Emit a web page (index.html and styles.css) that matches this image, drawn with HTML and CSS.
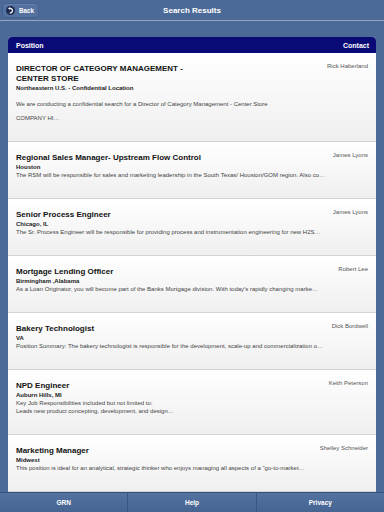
FILE: index.html
```html
<!DOCTYPE html>
<html lang="en">
<head>
    <meta charset="UTF-8">
    <meta name="viewport" content="width=device-width, initial-scale=1.0">
    <title>Search Results</title>
    <link rel="stylesheet" href="styles.css">
</head>
<body>
    <div class="navbar">
        <button class="back-button">
            <svg class="back-icon" width="9" height="9" viewBox="0 0 10 10">
                <circle cx="5" cy="5" r="5" fill="#1c2b4f" />
                <path d="M4.3 2.7 A2.5 2.5 0 1 1 4.1 7.6" stroke="#fff" stroke-width="1.4" fill="none" />
                <polygon points="2.2,2.7 4.6,1.2 4.6,4.2" fill="#fff" />
            </svg>
            Back
        </button>
        <div class="nav-title">Search Results</div>
    </div>

    <div class="main">
        <div class="panel">
            <div class="panel-header">
                <span>Position</span>
                <span>Contact</span>
            </div>

            <div class="job-row first">
                <div class="job-info">
                    <div class="job-title">DIRECTOR OF CATEGORY MANAGEMENT -<br>CENTER STORE</div>
                    <div class="job-location">Northeastern U.S. - Confidential Location</div>
                    <p class="job-desc">We are conducting a confidential search for a Director of Category Management - Center Store</p>
                    <p class="job-desc">COMPANY HI…</p>
                </div>
                <div class="job-contact">Rick Haberland</div>
            </div>

            <div class="job-row">
                <div class="job-info">
                    <div class="job-title">Regional Sales Manager- Upstream Flow Control</div>
                    <div class="job-location">Houston</div>
                    <div class="job-desc">The RSM will be responsible for sales and marketing leadership in the South Texas/ Houston/GOM region. Also co…</div>
                </div>
                <div class="job-contact">James Lyons</div>
            </div>

            <div class="job-row">
                <div class="job-info">
                    <div class="job-title">Senior Process Engineer</div>
                    <div class="job-location">Chicago, IL</div>
                    <div class="job-desc">The Sr. Process Engineer will be responsible for providing process and instrumentation engineering for new H2S…</div>
                </div>
                <div class="job-contact">James Lyons</div>
            </div>

            <div class="job-row">
                <div class="job-info">
                    <div class="job-title">Mortgage Lending Officer</div>
                    <div class="job-location">Birmingham ,Alabama</div>
                    <div class="job-desc">As a Loan Originator, you will become part of the Banks Mortgage division. With today's rapidly changing marke…</div>
                </div>
                <div class="job-contact">Robert Lee</div>
            </div>

            <div class="job-row">
                <div class="job-info">
                    <div class="job-title">Bakery Technologist</div>
                    <div class="job-location">VA</div>
                    <div class="job-desc">Position Summary: The bakery technologist is responsible for the development, scale-up and commercialization o…</div>
                </div>
                <div class="job-contact">Dick Bordwell</div>
            </div>

            <div class="job-row">
                <div class="job-info">
                    <div class="job-title">NPD Engineer</div>
                    <div class="job-location">Auburn Hills, MI</div>
                    <div class="job-desc">Key Job Responsibilities included but not limited to:</div>
                    <div class="job-desc">Leads new product concepting, development, and design…</div>
                </div>
                <div class="job-contact">Keith Peterson</div>
            </div>

            <div class="job-row">
                <div class="job-info">
                    <div class="job-title">Marketing Manager</div>
                    <div class="job-location">Midwest</div>
                    <div class="job-desc">This position is ideal for an analytical, strategic thinker who enjoys managing all aspects of a "go-to-market…</div>
                </div>
                <div class="job-contact">Shelley Schneider</div>
            </div>
        </div>
    </div>

    <div class="tabbar">
        <div class="tab">GRN</div>
        <div class="tab">Help</div>
        <div class="tab">Privacy</div>
    </div>
</body>
</html>
```

FILE: styles.css
```css
body {
    font-family: "Liberation Sans", Arial, sans-serif;
    background-color: #4c6a98;
    margin: 0;
    padding: 0;
    width: 384px;
    height: 512px;
    display: flex;
    flex-direction: column;
    overflow: hidden;
}

.navbar {
    height: 20px;
    border-bottom: 1px solid #98a3b6;
    display: flex;
    align-items: center;
    position: relative;
    flex-shrink: 0;
}

.back-button {
    margin-left: 2px;
    height: 15px;
    width: 37px;
    padding: 0 0 0 3px;
    display: flex;
    align-items: center;
    gap: 4px;
    background-color: #5471a0;
    border: 1px solid #43618f;
    border-radius: 4px;
    color: white;
    font-family: inherit;
    font-size: 6.3px;
    font-weight: bold;
    box-shadow: inset 0 1px 0 rgba(255, 255, 255, 0.12);
}

.back-icon {
    display: block;
}

.nav-title {
    position: absolute;
    left: 0;
    right: 0;
    text-align: center;
    color: white;
    font-size: 8px;
    font-weight: bold;
    pointer-events: none;
}

.main {
    flex: 1;
    padding: 16px 8px 0 8px;
    display: flex;
    flex-direction: column;
    min-height: 0;
}

.panel {
    flex: 1;
    background-color: #fff;
    border-radius: 4px 4px 0 0;
    overflow: hidden;
}

.panel-header {
    height: 16px;
    background-color: #0b0b78;
    color: white;
    font-size: 7px;
    font-weight: bold;
    display: flex;
    justify-content: space-between;
    align-items: center;
    padding: 0 7px 0 8px;
}

.job-row {
    display: flex;
    align-items: flex-start;
    padding: 11px 8px 19px 8px;
    border-bottom: 1px solid #d3d3d3;
    background: linear-gradient(#ffffff, #efefef);
}

.job-info {
    flex: 1;
    min-width: 0;
}

.job-title {
    font-size: 8px;
    line-height: 10px;
    font-weight: bold;
    color: #111;
}

.job-location {
    font-size: 6px;
    line-height: 8px;
    font-weight: bold;
    color: #222;
}

.job-desc {
    font-size: 6px;
    line-height: 8px;
    color: #444;
    margin: 0;
    white-space: nowrap;
}

.first .job-desc {
    margin-top: 8px;
}

.first .job-desc + .job-desc {
    margin-top: 6px;
}

.job-contact {
    font-size: 6px;
    line-height: 8px;
    color: #555;
    margin-top: -2px;
    white-space: nowrap;
}

.tabbar {
    height: 19px;
    flex-shrink: 0;
    display: flex;
    background: linear-gradient(#5472a0, #466492);
    border-top: 1px solid #34507c;
}

.tab {
    flex: 1;
    display: flex;
    align-items: center;
    justify-content: center;
    color: white;
    font-size: 6.5px;
    font-weight: bold;
    border-left: 1px solid #3a5683;
}

.tab:first-child {
    border-left: none;
}
```
